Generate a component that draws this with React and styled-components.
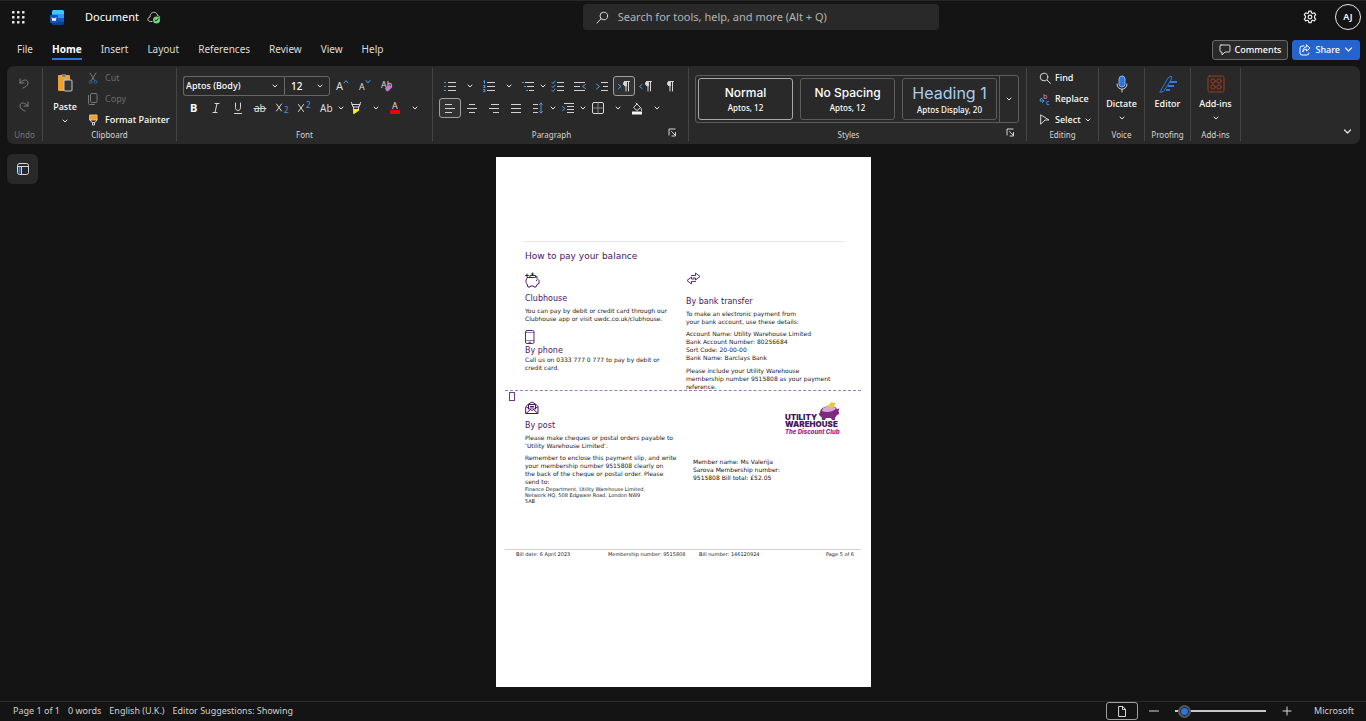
import React from "react";
import styled, { createGlobalStyle, css } from "styled-components";

const UI = '"Noto Sans", "Open Sans", sans-serif';
const BLUE = "#4a9ae8";

const GlobalStyle = createGlobalStyle`
  * { box-sizing: border-box; }
  body { margin: 0; background: #141414; color: #fff; font: 10px/14px ${UI}; }
  button, input, select { font: inherit; color: inherit; }
  button { background: none; border: 0; padding: 0; cursor: pointer; }
  svg { display: block; flex: none; overflow: visible; }
  p, h1, h2, h3 { margin: 0; font-weight: 400; }
`;

/* ---------- shell ---------- */
const Shell = styled.div`
  display: flex;
  flex-direction: column;
  min-height: 100vh;
  border-top: 1px solid #262626;
`;
const TitleBar = styled.header`
  display: grid;
  grid-template-columns: minmax(0, 15fr) 356px minmax(0, 11fr);
  align-items: center;
  height: 32px;
`;
const TitleLeft = styled.div`
  display: flex;
  align-items: center;
  padding-left: 12px;
`;
const WaffleButton = styled.button`margin-right: 25px;`;
const DocName = styled.h1`
  margin: 0 8px 0 21px;
  font-size: 11px;
`;
const SearchBox = styled.label`
  display: flex;
  align-items: center;
  gap: 9px;
  height: 26px;
  padding: 0 13px;
  border-radius: 4px;
  background: #292929;
`;
const SearchInput = styled.input`
  flex: 1;
  min-width: 0;
  padding: 0;
  border: 0;
  outline: 0;
  background: none;
  font-size: 11px;
  &::placeholder { color: #b4b4b4; opacity: 1; }
`;
const TitleRight = styled.div`
  display: flex;
  align-items: center;
  justify-content: flex-end;
  gap: 18px;
  padding-right: 5px;
`;
const Avatar = styled.button`
  width: 26px;
  height: 26px;
  border: 1px solid #e8e8e8;
  border-radius: 50%;
  font-size: 9px;
  font-weight: 600;
`;
const MenuBar = styled.div`
  display: flex;
  align-items: center;
  justify-content: space-between;
  height: 33px;
  padding: 0 6px 0 17px;
`;
const Tabs = styled.nav`
  display: flex;
  gap: 19px;
`;
const Tab = styled.a`
  padding: 2px 0;
  border-bottom: 2px solid ${(p) => (p.$active ? "#2f74d8" : "transparent")};
  color: ${(p) => (p.$active ? "#fff" : "#dcdcdc")};
  font-weight: ${(p) => (p.$active ? 700 : 400)};
  text-decoration: none;
`;
const MenuActions = styled.div`
  display: flex;
  gap: 4px;
`;
const ActionButton = styled.button`
  display: flex;
  align-items: center;
  gap: 4px;
  height: 20px;
  padding: 0 6px;
  border: 1px solid ${(p) => (p.$primary ? "#2564cf" : "#6a6a6a")};
  border-radius: 3px;
  background: ${(p) => (p.$primary ? "#2564cf" : "#292929")};
  font-size: 9px;
  font-weight: 500;
`;

/* ---------- ribbon ---------- */
const Ribbon = styled.section`
  display: flex;
  margin: 0 6px 0 7px;
  height: 78px;
  border-radius: 7px;
  background: #292929;
  font-size: 9px;
`;
const GroupBox = styled.div`
  position: relative;
  display: flex;
  flex-direction: column;
  flex: none;
  width: ${(p) => p.$w}px;
  margin: 2px 0 3px;
  padding-left: ${(p) => p.$pad ?? 6}px;
  border-right: 1px solid #454545;
`;
const GroupBody = styled.div`
  display: flex;
  align-items: flex-start;
  height: 60px;
  opacity: ${(p) => (p.$dim ? 0.5 : 1)};
`;
const GroupLabel = styled.div`
  margin: 0 ${(p) => (p.$launcher ? 18 : 0)}px 0 -${(p) => p.$pad ?? 6}px;
  color: ${(p) => (p.$dim ? "#777" : "#d6d6d6")};
  font-size: 8px;
  line-height: 13px;
  text-align: center;
`;
const Launcher = styled.button`
  position: absolute;
  right: 11px;
  bottom: 4px;
`;
const Rows = styled.div`
  display: flex;
  flex-direction: column;
  gap: 1px;
`;
const ToolRows = styled.div`
  display: flex;
  flex-direction: column;
  gap: 2px;
  padding-top: 8px;
`;
const ToolRow = styled.div`
  display: flex;
  align-items: center;
`;
const ToolButton = styled.button`
  display: flex;
  align-items: center;
  justify-content: center;
  width: 22px;
  height: 20px;
  ${(p) => p.$on && css`
    border: 1px solid #a0a0a0;
    border-radius: 3px;
    background: #333;
  `}
`;
const DropButton = styled.button`
  display: flex;
  align-items: center;
  justify-content: center;
  width: ${(p) => (p.$narrow ? 8 : 17)}px;
  height: 20px;
`;
const CommandButton = styled.button`
  display: flex;
  align-items: center;
  gap: 4px;
  height: 20px;
  color: ${(p) => (p.disabled ? "#6c6c6c" : "#fff")};
  font-weight: ${(p) => (p.disabled ? 400 : 500)};
`;
const BigButton = styled.button`
  display: flex;
  flex-direction: column;
  align-items: center;
  gap: 4px;
  width: ${(p) => p.$w}px;
  height: 60px;
  padding-top: ${(p) => (p.$tall ? 5 : 7)}px;
  font-weight: 500;
`;
const SelectBox = styled.label`
  position: relative;
  display: block;
  width: ${(p) => p.$w}px;
  height: 20px;
  margin-right: ${(p) => (p.$last ? 2 : 0)}px;
  border: 1px solid #666;
  border-right-width: ${(p) => (p.$last ? 1 : 0)}px;
  border-radius: ${(p) => (p.$last ? "0 3px 3px 0" : "3px 0 0 3px")};
  svg { position: absolute; right: 6px; top: 6px; pointer-events: none; }
`;
const Select = styled.select`
  appearance: none;
  width: 100%;
  height: 18px;
  padding: 0 ${(p) => (p.$inset ? 6 : 2)}px;
  border: 0;
  outline: 0;
  background: none;
  font-size: ${(p) => (p.$inset ? 10 : 9)}px;
  font-weight: 500;
`;
const Gallery = styled.div`
  display: flex;
  align-self: flex-end;
  height: 48px;
  margin-bottom: 5px;
  border: 1px solid #5c5c5c;
  border-radius: 3px;
`;
const Cards = styled.div`
  display: flex;
  gap: 7px;
  padding: 2px;
`;
const StyleCard = styled.button`
  display: flex;
  flex-direction: column;
  align-items: center;
  justify-content: center;
  width: 95px;
  border: 1px solid ${(p) => (p.$on ? "#a8a8a8" : "#5c5c5c")};
  border-radius: 3px;
  font-size: 8px;
  line-height: 13px;
  font-weight: 500;
`;
const StyleName = styled.span`
  font-family: Inter, ${UI};
  font-size: ${(p) => (p.$big ? 16 : 12)}px;
  line-height: ${(p) => (p.$big ? 20 : 16)}px;
  font-weight: ${(p) => (p.$big ? 400 : 500)};
  color: ${(p) => (p.$big ? "#a9cdf0" : "#fff")};
`;
const GalleryMore = styled.button`
  display: flex;
  align-items: center;
  justify-content: center;
  width: 19px;
  border-left: 1px solid #5c5c5c;
`;
const CollapseButton = styled.button`
  align-self: flex-end;
  margin: 0 8px 8px auto;
`;

/* ---------- canvas ---------- */
const Canvas = styled.main`
  display: grid;
  grid-template-columns: minmax(0, 1fr) auto minmax(0, 1fr);
  flex: 1;
  align-items: start;
  padding: 10px 6px 14px 7px;
`;
const NavButton = styled.button`
  display: flex;
  align-items: center;
  justify-content: center;
  width: 31px;
  height: 30px;
  border-radius: 6px;
  background: #292929;
`;
const Paper = styled.article`
  width: 375px;
  min-height: 530px;
  margin-top: 3px;
  padding: 84px 10px 0 9px;
  background: #fff;
  color: #222;
  font: 6px/8px "DejaVu Sans", sans-serif;
`;
const TopRule = styled.hr`
  height: 1px;
  margin: 0 16px 0 18px;
  border: 0;
  background: #e8e8e8;
`;
const PaperTitle = styled.h2`
  padding: 8px 0 0 20px;
  color: #4b1463;
  font-size: 9px;
  line-height: 12px;
`;
const Columns = styled.div`
  display: grid;
  grid-template-columns: 161px 1fr;
  height: 128px;
  padding-left: 20px;
`;
const Method = styled.section`
  padding-top: 10px;
`;
const MethodTitle = styled.h3`
  margin: ${(p) => p.$above ?? 6}px 0 ${(p) => p.$below ?? 3}px;
  color: #4b1463;
  font-size: 8px;
  line-height: 10px;
`;
const Para = styled.p`
  margin-bottom: ${(p) => p.$below ?? 0}px;
  white-space: nowrap;
`;
const SmallPara = styled.p`
  font-size: 5px;
  line-height: 6px;
  white-space: nowrap;
`;
const Slip = styled.div`
  position: relative;
  display: grid;
  grid-template-columns: 168px 1fr;
  height: 159px;
  padding-left: 20px;
  border-top: 1px dashed #a878b8;
`;
const SlipMark = styled.span`
  position: absolute;
  left: 4px;
  top: 1px;
  width: 6px;
  height: 9px;
  border: 1px solid #6b3d80;
`;
const Member = styled.div`
  color: #111;
  p { margin-top: 23px; white-space: nowrap; }
`;
const Logo = styled.svg`margin: 10px 0 0 92px;`;
const PaperFooter = styled.footer`
  display: grid;
  grid-template-columns: 92px 91px 1fr auto;
  padding: 1px 7px 0 11px;
  border-top: 1px solid #d0d0d0;
  font-size: 5px;
  line-height: 6px;
  white-space: nowrap;
`;

/* ---------- status bar ---------- */
const StatusBar = styled.footer`
  display: flex;
  align-items: center;
  justify-content: space-between;
  height: 21px;
  padding: 0 12px 2px 13px;
  border-top: 1px solid #2c2c2c;
  color: #d0d0d0;
  font-size: 9px;
`;
const StatusGroup = styled.div`
  display: flex;
  align-items: center;
  gap: 8px;
`;
const ViewButton = styled.button`
  display: flex;
  align-items: center;
  justify-content: center;
  width: 32px;
  height: 18px;
  border: 1px solid #a0a0a0;
  border-radius: 3px;
`;
const ZoomGroup = styled.div`
  display: flex;
  align-items: center;
  gap: 16px;
  margin: 0 14px 0 3px;
`;
const ZoomSlider = styled.input`
  appearance: none;
  width: 91px;
  height: 14px;
  margin: 0;
  background: linear-gradient(#c8c8c8, #c8c8c8) center / 100% 2px no-repeat;
  &::-webkit-slider-thumb {
    appearance: none;
    width: 13px;
    height: 13px;
    border: 2px solid #565656;
    border-radius: 50%;
    background: #2f74d8;
    box-shadow: inset 0 0 0 1px #222;
  }
`;

/* ---------- drawings ---------- */
const Svg = ({ w = 16, h = w, vb, children, ...rest }) => (
  <svg width={w} height={h} viewBox={vb || `0 0 ${w} ${h}`} fill="none" stroke="#d8d8d8" strokeLinecap="round" strokeLinejoin="round" aria-hidden="true" {...rest}>
    {children}
  </svg>
);
const Chevron = ({ size = 6, ...p }) => (
  <Svg w={size} vb="0 0 6 6" stroke="#e8e8e8" {...p}><path d="M1 2l2 2 2-2" /></Svg>
);
const lines = (list, color = "#d0d0d0") =>
  list.map(([x1, x2, y]) => <path key={`${x1}-${y}`} d={`M${x1} ${y}H${x2}`} stroke={color} strokeLinecap="butt" />);

const icons = {
  bullets: <Svg w={12}>{lines([[4, 12, 2.5], [4, 12, 6.5], [4, 12, 10.5]])}{lines([[0, 2, 2.5], [0, 2, 6.5], [0, 2, 10.5]], BLUE)}</Svg>,
  numbers: <Svg w={12}>{lines([[4, 12, 2.5], [4, 12, 6.5], [4, 12, 10.5]])}<path d="M.5 1.5l1-1v3M.5 5.5h1.5v1L.5 7.5H2M.5 9.5H2v2H.5" stroke={BLUE} /></Svg>,
  multi: <Svg w={12}>{lines([[3, 12, 2.5], [5, 12, 6.5], [7, 12, 10.5]])}{lines([[0, 2, 2.5], [2, 4, 6.5], [4, 6, 10.5]], BLUE)}</Svg>,
  checks: <Svg w={12}>{lines([[5, 12, 2.5], [5, 12, 6.5], [5, 12, 10.5]])}<path d="M0 2.5l1 1L3 1M0 6.5l1 1L3 5M0 10.5l1 1L3 9" stroke={BLUE} /></Svg>,
  outdent: <Svg w={12}>{lines([[0, 11, 2.5], [0, 6, 6.5], [0, 11, 10.5]])}<path d="M11.5 4.5l-3 2 3 2" stroke={BLUE} /></Svg>,
  indent: <Svg w={12}>{lines([[5, 12, 2.5], [7, 12, 6.5], [5, 12, 10.5]])}<path d="M.5 4l3 2.500-3 2.500" stroke={BLUE} /></Svg>,
  left: <Svg w={12}>{lines([[1, 8, 2.5], [1, 11, 6.5], [1, 8, 10.5]])}</Svg>,
  center: <Svg w={12}>{lines([[3, 9, 2.5], [1, 11, 6.5], [3, 9, 10.5]])}</Svg>,
  right: <Svg w={12}>{lines([[3, 11, 2.5], [1, 11, 6.5], [5, 11, 10.5]])}</Svg>,
  justify: <Svg w={12}>{lines([[1, 11, 2.5], [1, 11, 6.5], [1, 11, 10.5]])}</Svg>,
  spacing: <Svg w={12}>{lines([[1, 6, 2.5], [1, 6, 6.5], [1, 6, 10.5]])}<path d="M9 1v10M7.500 2.500L9 1l1.500 1.500M7.500 9.500L9 11l1.500-1.500" stroke={BLUE} /></Svg>,
  special: <Svg w={12}>{lines([[2, 12, 1.5], [5, 12, 4.500], [5, 12, 7.500], [5, 12, 10.5]])}<path d="M.5 4.500L3 6.500.5 8.500" stroke={BLUE} /></Svg>,
  borders: <Svg w={12}><rect x=".5" y=".5" width="11" height="11" rx="1.500" /><path d="M6 1v10M1 6h10" stroke="#888" /></Svg>,
  fill: <Svg w={12} h={13}><path d="M5 1l4.500 4.500L6 8.500 2.500 5.500 6 2M9.500 5.500c1 1 1 2 1 3" /><path d="M1 11h10" stroke="#f4f4f4" strokeWidth="3" strokeLinecap="butt" /></Svg>,
};
const Pilcrow = ({ arrow }) => (
  <Svg w={14} h={12}>
    <path d="M7.500 1.500h5M9 1.500v9.500M11.500 1.500v9.500" /><path d="M9 1.500C5.500 1 5.500 6 9 6z" fill="#d8d8d8" />
    {arrow === "right" && <path d="M1.500 4.500l2.500 2-2.500 2" stroke={BLUE} />}
    {arrow === "left" && <path d="M3 4.500L.5 6.500l2.500 2" stroke={BLUE} />}
  </Svg>
);
const letter = { stroke: "none", fill: "#dcdcdc", fontFamily: UI };
const Glyph = ({ children, w = 16 }) => <Svg w={w} h={14}>{children}</Svg>;

const WordLogo = () => (
  <svg width="14" height="15" viewBox="0 0 14 15" aria-hidden="true">
    <rect x="2" y="0" width="12" height="15" rx="1.500" fill="#103f91" />
    <path d="M2 4V1.500Q2 0 3.500 0h9Q14 0 14 1.500V4z" fill="#41c9f4" />
    <path d="M2 4h12v4H2z" fill="#2b9af0" />
    <path d="M2 8h12v3.500H2z" fill="#185abd" />
    <rect x="0" y="5" width="8" height="8" rx="1" fill="#1550b8" />
    <path d="M2 7.500l1 3.500 1-3 1 3 1-3.500" fill="none" stroke="#fff" />
  </svg>
);
const PiggyIcon = () => (
  <Svg w={15} h={16} stroke="#4b1463">
    <path d="M2.500 5.500h7l2.500-1v2l2 2v3l-2 1-1 2.500H9l-.5-1h-3l-.5 1H3L2 12C.5 10.500.5 7.500 2.500 5.500z" />
    <path d="M.5 3.500h3M2 2v3M5 5V3.500h5.500V5M7.500 1v2.500M6.500 2h2M11.500 8.200v.3" />
  </Svg>
);
const PhoneIcon = () => (
  <Svg w={10} h={15} stroke="#5a2a70">
    <rect x=".5" y=".5" width="8.500" height="13" rx="1.500" /><path d="M.5 10.500H9M.5 2.500H9" strokeWidth=".6" /><path d="M4 12.200h1.500" />
  </Svg>
);
const TransferIcon = () => (
  <Svg w={15} h={13} stroke="#5a2a70">
    <path d="M5.500 3.500h4v-2.500L14 4.500 9.500 8V6H7.500M9.500 9.500h-4V12L1 8.500 5.500 5v2h2.500" />
  </Svg>
);
const PostIcon = () => (
  <Svg w={14} h={14} stroke="#4b1463">
    <path d="M1 5.500L3.500 3 7 1l3.500 2L13 5.500v7H1z" /><path d="M3.500 8V3.500h7V8M1.500 6L7 9.500 12.500 6M1.500 12L5 9M12.500 12L9 9M5.500 5.500h3M5.500 7h3" />
  </Svg>
);
const UWLogo = () => (
  <Logo width="56" height="34" viewBox="0 0 56 34" role="img" aria-label="Utility Warehouse, The Discount Club">
    <path d="M33 13l2-1c0-5 5-7 10-7 4 0 6 1 7 3l2.500-.5-1 2.500.8 3-2.300 1c-1 2-2 2-2 3v2h-3l-1-2h-5l-1 2h-3l-.5-3c-2-1-2.500-2-2.500-3z" fill="#7d2a80" />
    <path d="M37 10c0-3 4-5 8-5 3 0 5 1 6 3-4 3-10 4-14 2z" fill="#d9a9d6" />
    <path d="M43 6c-1.500-2 .5-2.500 2-3 0-2 3-2.500 4-1 1 2 0 4-2 4.500-1.500.5-3 .5-4-.5z" fill="#f4c52f" />
    <path d="M49 2l2 .8-2 .8z" fill="#f08a20" />
    <g fontFamily="Inter, sans-serif" fontWeight="900" fill="#4b1463">
      <text x="0" y="19" fontSize="8">UTILITY</text>
      <text x="0" y="26" fontSize="8">WAREHOUSE</text>
    </g>
    <text x="0" y="33" fontFamily="Inter, sans-serif" fontSize="6" fontWeight="800" fontStyle="italic" fill="#a3158c">The Discount Club</text>
  </Logo>
);

const Group = ({ label, w, pad, dim, launcher, children }) => (
  <GroupBox $w={w} $pad={pad}>
    <GroupBody $dim={dim}>{children}</GroupBody>
    <GroupLabel $pad={pad} $dim={dim} $launcher={launcher}>{label}</GroupLabel>
    {launcher && (
      <Launcher aria-label={`${label} settings`}>
        <Svg w={9}><path d="M1 7V1h6M3.500 3.500L7.500 7.500M7.500 4.500v3.500H4" /></Svg>
      </Launcher>
    )}
  </GroupBox>
);
const Tool = ({ label, on, children }) => <ToolButton $on={on} aria-label={label}>{children}</ToolButton>;
const Drop = ({ label, narrow }) => <DropButton $narrow={narrow} aria-label={`${label} options`}><Chevron /></DropButton>;

export default function App() {
  return (
    <Shell>
      <GlobalStyle />
      <TitleBar>
        <TitleLeft>
          <WaffleButton aria-label="App launcher">
            <Svg w={13} stroke="none" fill="#e8e8e8">
              {[0, 5, 10].flatMap((y) => [0, 5, 10].map((x) => <rect key={`${x}-${y}`} x={x} y={y} width="2.500" height="2.500" rx=".6" />))}
            </Svg>
          </WaffleButton>
          <WordLogo />
          <DocName>Document</DocName>
          <Svg w={14} h={13} stroke="#c8c8c8">
            <path d="M5 10.500H3.500C0 10.500 0 6.500 3 6 3 0 10 0 10.500 4.500c1 0 2 .8 2.200 2" />
            <circle cx="9.500" cy="9" r="3.500" fill="#6fd07c" stroke="none" /><path d="M8 9l1 1 2-2.200" stroke="#143a1a" />
          </Svg>
        </TitleLeft>
        <SearchBox>
          <Svg w={13}><circle cx="7.800" cy="5" r="3.800" /><path d="M5 7.800L1 12" /></Svg>
          <SearchInput aria-label="Search" placeholder="Search for tools, help, and more (Alt + Q)" />
        </SearchBox>
        <TitleRight>
          <button aria-label="Settings">
            <Svg w={14} vb="0 0 24 24" stroke="#f0f0f0" strokeWidth="2">
              <path d="M10 2h4l.6 3 2 1 2.800-1.200 2.400 3.200-2 2.300v3l2 2.300-2.400 3.200-2.800-1.200-2 1-.6 3h-4l-.6-3-2-1-2.800 1.200L2.200 15.600l2-2.300v-3l-2-2.300 2.400-3.200L7.400 6l2-1z" /><circle cx="12" cy="12" r="3.200" />
            </Svg>
          </button>
          <Avatar aria-label="Account">AJ</Avatar>
        </TitleRight>
      </TitleBar>

      <MenuBar>
        <Tabs>
          {["File", "Home", "Insert", "Layout", "References", "Review", "View", "Help"].map((t) => (
            <Tab key={t} href="#" $active={t === "Home"}>{t}</Tab>
          ))}
        </Tabs>
        <MenuActions>
          <ActionButton>
            <Svg w={12}><path d="M2 1h8q1 0 1 1v5q0 1-1 1H6l-3 3V8H2Q1 8 1 7V2q0-1 1-1z" /></Svg>
            Comments
          </ActionButton>
          <ActionButton $primary>
            <Svg w={12} stroke="#fff"><path d="M5 2H3Q1 2 1 4v5q0 2 2 2h5q2 0 2-2M7.500 1L11 4 7.500 7V5.200C5.500 5.200 4.500 6 3.800 8c0-3.500 1.500-5 3.700-5.200z" /></Svg>
            Share
            <Chevron size={9} strokeWidth=".8" />
          </ActionButton>
        </MenuActions>
      </MenuBar>

      <Ribbon>
        <Group label="Undo" w={36} dim pad={11}>
          <ToolRows>
            <Svg w={12} h={20}><path d="M2 3v4h4M2 7C5 3 10 3 10 7c0 3-3 4-5 5" /></Svg>
            <Svg w={12} h={20}><path d="M10 4v4H6M10 8C7 4 2 4 2 8c0 3 3 4 5 5" /></Svg>
          </ToolRows>
        </Group>
        <Group label="Clipboard" w={134}>
          <BigButton $w={32} $tall>
            <Svg w={18} h={23}>
              <path d="M3 3h10v14H3z" fill="#f0a030" stroke="#f0a030" strokeWidth="2" /><path d="M6 2h4v2H6z" fill="#444" stroke="#bbb" />
              <rect x="8" y="7" width="8" height="11" rx="1" fill="#333" stroke="#c8c8c8" />
            </Svg>
            Paste
            <Chevron />
          </BigButton>
          <Rows>
            <CommandButton disabled>
              <Svg w={20} h={12} stroke="#777"><path d="M9 1l5 8M15 1l-5 8" /><g stroke="#2d5d8c"><circle cx="9.500" cy="10" r="1.500" /><circle cx="14.500" cy="10" r="1.500" /></g></Svg>
              Cut
            </CommandButton>
            <CommandButton disabled>
              <Svg w={20} h={12} stroke="#777"><rect x="9.500" y=".5" width="6.500" height="9" rx="1" /><path d="M7.500 2.500v8q0 1 1 1h5" /></Svg>
              Copy
            </CommandButton>
            <CommandButton>
              <Svg w={20} h={12}><path d="M9 1h7v5H9z" fill="#f0a030" stroke="#f0c060" /><path d="M9 6l2 2.500h3L16 6M11.500 8.500V11h2V8.500" /></Svg>
              Format Painter
            </CommandButton>
          </Rows>
        </Group>
        <Group label="Font" w={256}>
          <ToolRows>
            <ToolRow>
              <SelectBox $w={101}><Select aria-label="Font name"><option>Aptos (Body)</option></Select><Chevron /></SelectBox>
              <SelectBox $w={46} $last><Select $inset aria-label="Font size"><option>12</option></Select><Chevron /></SelectBox>
              <Tool label="Grow font"><Glyph><text x="1" y="11" fontSize="11" {...letter}>A</text><path d="M9 4l2-2.500L13 4" stroke={BLUE} /></Glyph></Tool>
              <Tool label="Shrink font"><Glyph><text x="2" y="11" fontSize="9" {...letter}>A</text><path d="M9 1.500L11 4l2-2.500" stroke={BLUE} /></Glyph></Tool>
              <Tool label="Clear formatting"><Glyph><text x="2" y="9" fontSize="9" {...letter}>Ab</text><path d="M6 9.500l4-4 3 3-4 4q-2 0-3-3z" fill="#c07ad0" stroke="none" /></Glyph></Tool>
            </ToolRow>
            <ToolRow>
              <Tool label="Bold"><Glyph><text x="4" y="11" fontSize="11" fontWeight="700" {...letter} fill="#fff">B</text></Glyph></Tool>
              <Tool label="Italic"><Glyph><path d="M7 2.500h4M5 11.500h4M9 2.500l-2 9" /></Glyph></Tool>
              <Tool label="Underline"><Glyph><path d="M5.500 2v4.500c0 4 5 4 5 0V2M4.500 12.500h7" /></Glyph></Tool>
              <Tool label="Strikethrough"><Glyph><text x="2" y="11" fontSize="10" {...letter}>ab</text><path d="M2 7.500h12" /></Glyph></Tool>
              <Tool label="Subscript"><Glyph><path d="M2.500 3l5 7M7.500 3l-5 7" /><text x="10" y="12" fontSize="8" {...letter} fill={BLUE}>2</text></Glyph></Tool>
              <Tool label="Superscript"><Glyph><path d="M2.500 3.500l5 7M7.500 3.500l-5 7" /><text x="10" y="7" fontSize="8" {...letter} fill={BLUE}>2</text></Glyph></Tool>
              <Tool label="Change case"><Glyph><text x="2" y="11" fontSize="10" {...letter}>Ab</text></Glyph></Tool>
              <Drop narrow label="Change case" />
              <Tool label="Highlight"><Glyph><path d="M3.500 1.500L5 6h6l1.500-4.500M4 3.500h8M5.500 6v3h5V6" /><path d="M6 8.500h4.500v1L6 12.500z" fill="#ffee20" stroke="#ffee20" /></Glyph></Tool>
              <Drop label="Highlight" />
              <Tool label="Font colour"><Glyph><text x="5" y="8" fontSize="9" {...letter}>A</text><path d="M3 11h10" stroke="#f00000" strokeWidth="4" strokeLinecap="butt" /></Glyph></Tool>
              <Drop label="Font colour" />
            </ToolRow>
          </ToolRows>
        </Group>
        <Group label="Paragraph" w={256} launcher>
          <ToolRows>
            <ToolRow>
              <Tool label="Bullets">{icons.bullets}</Tool><Drop label="Bullets" />
              <Tool label="Numbering">{icons.numbers}</Tool><Drop label="Numbering" />
              <Tool label="Multilevel list">{icons.multi}</Tool><Drop narrow label="Multilevel list" />
              <Tool label="Checklist">{icons.checks}</Tool>
              <Tool label="Decrease indent">{icons.outdent}</Tool>
              <Tool label="Increase indent">{icons.indent}</Tool>
              <Tool label="Left to right" on><Pilcrow arrow="right" /></Tool>
              <Tool label="Right to left"><Pilcrow arrow="left" /></Tool>
              <Tool label="Show marks"><Pilcrow /></Tool>
            </ToolRow>
            <ToolRow>
              <Tool label="Align left" on>{icons.left}</Tool>
              <Tool label="Centre">{icons.center}</Tool>
              <Tool label="Align right">{icons.right}</Tool>
              <Tool label="Justify">{icons.justify}</Tool>
              <Tool label="Line spacing">{icons.spacing}</Tool><Drop narrow label="Line spacing" />
              <Tool label="Special indent">{icons.special}</Tool><Drop narrow label="Special indent" />
              <Tool label="Borders">{icons.borders}</Tool><Drop label="Borders" />
              <Tool label="Shading">{icons.fill}</Tool><Drop label="Shading" />
            </ToolRow>
          </ToolRows>
        </Group>
        <Group label="Styles" w={338} launcher>
          <Gallery>
            <Cards>
              <StyleCard $on><StyleName>Normal</StyleName>Aptos, 12</StyleCard>
              <StyleCard><StyleName>No Spacing</StyleName>Aptos, 12</StyleCard>
              <StyleCard><StyleName $big>Heading 1</StyleName>Aptos Display, 20</StyleCard>
            </Cards>
            <GalleryMore aria-label="More styles"><Chevron /></GalleryMore>
          </Gallery>
        </Group>
        <Group label="Editing" w={72} pad={12}>
          <Rows>
            <CommandButton><Svg w={12}><circle cx="5" cy="5" r="3.800" /><path d="M8 8l3.500 3.500" /></Svg>Find</CommandButton>
            <CommandButton><Svg w={12}><text x="4" y="6" fontSize="7" {...letter} fill="#c07ad0">b</text><text x="7" y="12" fontSize="7" {...letter} fill={BLUE}>c</text><path d="M3 5Q1 5 1 8h4M3.500 6.500L5 8 3.500 9.500" stroke={BLUE} /></Svg>Replace</CommandButton>
            <CommandButton><Svg w={12}><path d="M2 1l8 5H6l-4 4z" /></Svg>Select <Chevron /></CommandButton>
          </Rows>
        </Group>
        <Group label="Voice" w={46} pad={0}>
          <BigButton $w={45}>
            <Svg w={18}><rect x="6" y="1" width="6" height="11" rx="3" fill="#2f74d8" stroke="#7fb2f0" /><path d="M4 9c0 7 10 7 10 0M9 14.500V17" /></Svg>
            Dictate<Chevron />
          </BigButton>
        </Group>
        <Group label="Proofing" w={46} pad={0}>
          <BigButton $w={45}>
            <Svg w={18} stroke="#2f7ae0"><path d="M1 17L9 3l3-2 1 1-1 3-7 11z" /><path d="M11 7h7M9 11h6M7 15h4" strokeWidth="2" strokeLinecap="butt" /></Svg>
            Editor
          </BigButton>
        </Group>
        <Group label="Add-ins" w={50} pad={0}>
          <BigButton $w={49}>
            <Svg w={18} stroke="#a63c1c"><rect x="1" y="1" width="16" height="16" rx="1.500" /><circle cx="6" cy="6" r="2.200" /><circle cx="12" cy="6" r="2.200" /><circle cx="6" cy="12" r="2.200" /><circle cx="12" cy="12" r="2.200" /></Svg>
            Add-ins<Chevron />
          </BigButton>
        </Group>
        <CollapseButton aria-label="Collapse ribbon"><Chevron size={9} strokeWidth=".8" /></CollapseButton>
      </Ribbon>

      <Canvas>
        <NavButton aria-label="Navigation pane">
          <Svg w={12}><rect x=".5" y=".5" width="11" height="11" rx="2" /><path d="M1 3.500h10M4.500 4v7" /><path d="M2.500 4v6.500" stroke="#2f7ae0" strokeWidth="2" strokeLinecap="butt" /></Svg>
        </NavButton>
        <Paper>
          <TopRule />
          <PaperTitle>How to pay your balance</PaperTitle>
          <Columns>
            <Method>
              <PiggyIcon />
              <MethodTitle>Clubhouse</MethodTitle>
              <Para $below={7}>You can pay by debit or credit card through our<br />Clubhouse app or visit uwdc.co.uk/clubhouse.</Para>
              <PhoneIcon />
              <MethodTitle $above={1} $below={0}>By phone</MethodTitle>
              <Para>Call us on 0333 777 0 777 to pay by debit or<br />credit card.</Para>
            </Method>
            <Method>
              <TransferIcon />
              <MethodTitle $above={12}>By bank transfer</MethodTitle>
              <Para $below={4}>To make an electronic payment from<br />your bank account, use these details:</Para>
              <Para $below={5}>Account Name: Utility Warehouse Limited<br />Bank Account Number: 80256684<br />Sort Code: 20-00-00<br />Bank Name: Barclays Bank</Para>
              <Para>Please include your Utility Warehouse<br />membership number 9515808 as your payment<br />reference.</Para>
            </Method>
          </Columns>
          <Slip>
            <SlipMark />
            <Method>
              <PostIcon />
              <MethodTitle>By post</MethodTitle>
              <Para $below={4}>Please make cheques or postal orders payable to<br />‘Utility Warehouse Limited’.</Para>
              <Para>Remember to enclose this payment slip, and write<br />your membership number 9515808 clearly on<br />the back of the cheque or postal order. Please<br />send to:</Para>
              <SmallPara>Finance Department, Utility Warehouse Limited,<br />Network HQ, 508 Edgware Road, London NW9<br />5AB</SmallPara>
            </Method>
            <Member>
              <UWLogo />
              <p>Member name: Ms Valerija<br />Sarova Membership number:<br />9515808 Bill total: £52.05</p>
            </Member>
          </Slip>
          <PaperFooter>
            <span>Bill date: 6 April 2023</span>
            <span>Membership number: 9515808</span>
            <span>Bill number: 146120924</span>
            <span>Page 5 of 6</span>
          </PaperFooter>
        </Paper>
      </Canvas>

      <StatusBar>
        <StatusGroup>
          <span>Page 1 of 1</span><span>0 words</span><span>English (U.K.)</span><span>Editor Suggestions: Showing</span>
        </StatusGroup>
        <StatusGroup>
          <ViewButton aria-label="Page view"><Svg w={8} h={11}><path d="M1 .5h4L7.500 3.500v7H1zM4.500 .5v3h3" /></Svg></ViewButton>
          <ZoomGroup>
            <button aria-label="Zoom out"><Svg w={10}><path d="M.5 5h9" /></Svg></button>
            <ZoomSlider type="range" min="0" max="100" defaultValue="4" aria-label="Zoom" />
            <button aria-label="Zoom in"><Svg w={10}><path d="M1 5h8M5 1v8" /></Svg></button>
          </ZoomGroup>
          <span>Microsoft</span>
        </StatusGroup>
      </StatusBar>
    </Shell>
  );
}
